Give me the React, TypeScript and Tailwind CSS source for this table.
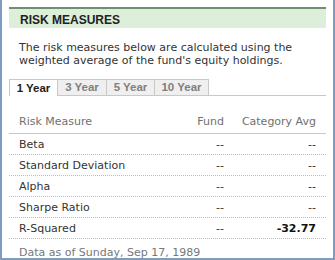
import React from 'react';

const rows = [
  { name: 'Beta', fund: '--', cat: '--' },
  { name: 'Standard Deviation', fund: '--', cat: '--' },
  { name: 'Alpha', fund: '--', cat: '--' },
  { name: 'Sharpe Ratio', fund: '--', cat: '--' },
  { name: 'R-Squared', fund: '--', cat: '-32.77', bold: true },
];

const tabs = [
  { label: '1 Year', w: 'w-[49px]' },
  { label: '3 Year', w: 'w-[50px]' },
  { label: '5 Year', w: 'w-[49px]' },
  { label: '10 Year', w: 'w-[55px]' },
];

const App: React.FC = () => {
  return (
    <div className="w-[335px] h-[260px] bg-white border-x-2 border-b-2 border-[#7d9cbf] pl-[7px] pr-[7px] pt-[7px] text-[11px] text-[#333] font-['DejaVu_Sans',Verdana,sans-serif]">
      <div className="h-[21px] border-t-2 border-[#6f8f6f] bg-[#ddefdb] pl-[11px] pt-[4px] leading-[14px] text-[12px] font-bold text-[#222] font-['Liberation_Sans',Arial,sans-serif]">
        RISK MEASURES
      </div>
      <p className="mt-[14px] px-[10px] leading-[12.5px]">
        The risk measures below are calculated using the weighted average of the fund's equity holdings.
      </p>
      <div className="mt-[12px] flex h-[17px] text-[11.5px] font-['Liberation_Sans',Arial,sans-serif] font-bold">
        {tabs.map((t, i) =>
          i === 0 ? (
            <div key={t.label} className={`${t.w} pt-px border-x border-t border-[#c8c8c8] bg-white text-[#222] flex items-center justify-center`}>
              {t.label}
            </div>
          ) : (
            <div key={t.label} className={`${t.w} pt-px -ml-px border border-[#c8c8c8] bg-[#efefef] text-[#808080] flex items-center justify-center`}>
              {t.label}
            </div>
          )
        )}
        <div className="flex-1 border-b border-[#c8c8c8]" />
      </div>
      <div className="flex items-end h-[38px] pb-[3px] border-b border-[#c8c8c8] text-[#707070] px-[10px]">
        <span className="flex-1">Risk Measure</span>
        <span className="w-[60px] text-right">Fund</span>
        <span className="w-[92px] text-right">Category Avg</span>
      </div>
      {rows.map((r) => (
        <div key={r.name} className="flex items-center pt-[3px] h-[21px] border-b border-dotted border-[#bbb] px-[10px] text-[#333]">
          <span className="flex-1">{r.name}</span>
          <span className="w-[60px] text-right">{r.fund}</span>
          <span className={`w-[92px] text-right ${r.bold ? 'font-bold text-[#111]' : ''}`}>{r.cat}</span>
        </div>
      ))}
      <div className="px-[10px] pt-[6px] text-[#777]">Data as of Sunday, Sep 17, 1989</div>
    </div>
  );
};

export default App;
